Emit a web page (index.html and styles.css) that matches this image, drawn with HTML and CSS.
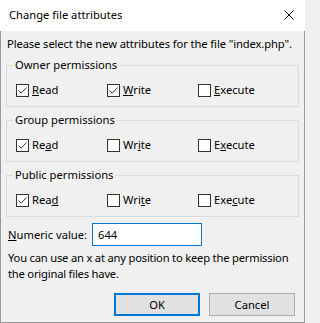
FILE: index.html
```html
<!DOCTYPE html>
<html>
<head>
<meta charset="utf-8">
<link rel="stylesheet" href="styles.css">
</head>
<body>
<div class="window">
  <div class="titlebar">
    <span class="title">Change file attributes</span>
    <svg class="close" width="10" height="10" viewBox="0 0 10 10"><path d="M0.5 0.5L9.5 9.5M9.5 0.5L0.5 9.5" stroke="#000" stroke-width="1" fill="none"/></svg>
  </div>
  <div class="content">
    <p class="intro">Please select the new attributes for the file "index.php".</p>

    <fieldset class="group">
      <legend>Owner permissions</legend>
      <div class="row">
        <label class="check"><span class="box on"><svg viewBox="0 0 11 11" width="11" height="11"><path d="M1.5 5.5L4.2 8.2L9.5 2.5" stroke="#333" stroke-width="1" fill="none"/></svg></span><span><u>R</u>ead</span></label>
        <label class="check"><span class="box on"><svg viewBox="0 0 11 11" width="11" height="11"><path d="M1.5 5.5L4.2 8.2L9.5 2.5" stroke="#333" stroke-width="1" fill="none"/></svg></span><span><u>W</u>rite</span></label>
        <label class="check"><span class="box"></span><span><u>E</u>xecute</span></label>
      </div>
    </fieldset>

    <fieldset class="group">
      <legend>Group permissions</legend>
      <div class="row">
        <label class="check"><span class="box on"><svg viewBox="0 0 11 11" width="11" height="11"><path d="M1.5 5.5L4.2 8.2L9.5 2.5" stroke="#333" stroke-width="1" fill="none"/></svg></span><span>Re<u>a</u>d</span></label>
        <label class="check"><span class="box"></span><span>Wr<u>i</u>te</span></label>
        <label class="check"><span class="box"></span><span>E<u>x</u>ecute</span></label>
      </div>
    </fieldset>

    <fieldset class="group">
      <legend>Public permissions</legend>
      <div class="row">
        <label class="check"><span class="box on"><svg viewBox="0 0 11 11" width="11" height="11"><path d="M1.5 5.5L4.2 8.2L9.5 2.5" stroke="#333" stroke-width="1" fill="none"/></svg></span><span>Rea<u>d</u></span></label>
        <label class="check"><span class="box"></span><span>Wri<u>t</u>e</span></label>
        <label class="check"><span class="box"></span><span>Exe<u>c</u>ute</span></label>
      </div>
    </fieldset>

    <div class="numeric">
      <span class="numlabel"><u>N</u>umeric value:</span>
      <div class="input">644</div>
    </div>

    <p class="help">You can use an x at any position to keep the permission the original files have.</p>

    <div class="buttons">
      <div class="btn default">OK</div>
      <div class="btn">Cancel</div>
    </div>
  </div>
</div>
</body>
</html>
```

FILE: styles.css
```css
* { box-sizing: border-box; }
html, body { margin: 0; padding: 0; }
body {
  font-family: "Noto Sans", sans-serif;
  font-size: 11.2px;
  line-height: 16px;
  color: #000;
  background: #f0f0f0;
}
.window {
  width: 305px;
  height: 323px;
  display: flex;
  flex-direction: column;
  overflow: hidden;
}
.titlebar {
  height: 31px;
  background: #fff;
  display: flex;
  align-items: center;
  justify-content: space-between;
  padding: 0 11px 1px 9px;
  flex: none;
}
.title { color: #000; }
.close { display: block; }
.content {
  flex: 1;
  background: #f0f0f0;
  border: 1px solid #999;
  border-top: none;
  padding: 5px 5px 0 5px;
  display: flex;
  flex-direction: column;
}
.intro {
  margin: 0 0 5px 1px;
  white-space: nowrap;
  letter-spacing: -0.1px;
}
.group {
  margin: 0 0 5px 0;
  border: 1px solid #dcdcdc;
  padding: 9px 9px 8px 9px;
  min-width: 0;
}
.group legend {
  padding: 0 2px;
  margin-left: -3px;
}
.row {
  display: grid;
  grid-template-columns: 91px 91px auto;
}
.check {
  display: flex;
  align-items: center;
  gap: 3px;
  height: 16px;
}
.box {
  width: 13px;
  height: 13px;
  border: 1px solid #333;
  background: #fff;
  display: flex;
  align-items: center;
  justify-content: center;
  flex: none;
}
.box svg { display: block; }
.numeric {
  display: flex;
  align-items: center;
  padding-left: 2px;
  margin-top: 1px;
}
.numlabel { white-space: nowrap; width: 84px; }
.input {
  width: 110px;
  height: 23px;
  border: 1px solid #0078d7;
  background: #fff;
  padding: 0 5px;
  line-height: 21px;
}
.help {
  margin: 4px 0 0 2px;
  letter-spacing: -0.2px;
}
.buttons {
  display: flex;
  justify-content: flex-end;
  gap: 9px;
  margin-top: 11px;
  padding-right: 4px;
}
.btn {
  width: 86px;
  height: 23px;
  background: #e1e1e1;
  border: 1px solid #adadad;
  display: flex;
  align-items: center;
  justify-content: center;
}
.btn.default {
  border: 2px solid #0078d7;
}
```
